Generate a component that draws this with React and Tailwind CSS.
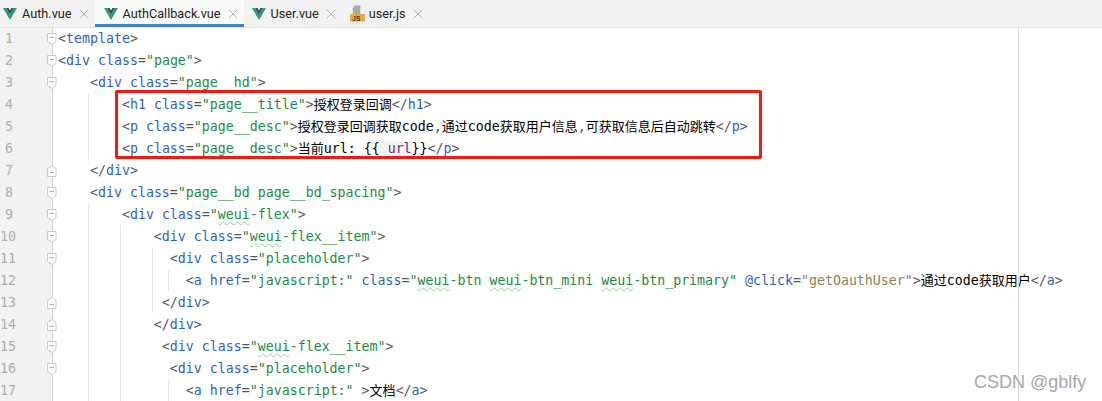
import { X } from "lucide-react";

const TAG = "text-[#2f5fc4]";
const ATTR = "text-[#2f5fc4]";
const STR = "text-[#1c8a46]";
const BR = "text-[#555555]";
const TXT = "text-black";

const Weui = ({ children }) => (
  <span className="underline decoration-wavy decoration-[#9cc79c] decoration-1 underline-offset-2">{children}</span>
);

const Open = ({ tag, children }) => (
  <>
    <span className={BR}>&lt;</span>
    <span className={TAG}>{tag}</span>
    {children}
    <span className={BR}>&gt;</span>
  </>
);

const Close = ({ tag }) => (
  <>
    <span className={BR}>&lt;/</span>
    <span className={TAG}>{tag}</span>
    <span className={BR}>&gt;</span>
  </>
);

const Attr = ({ name, children }) => (
  <>
    <span className={ATTR}> {name}</span>
    <span className={BR}>=</span>
    <span className={STR}>"{children}"</span>
  </>
);

const Cjk = ({ children }) => <span className={`${TXT} text-[13px]`}>{children}</span>;

const lines = [
  { fold: "start", code: <Open tag="template" /> },
  { fold: "start", code: <Open tag="div"><Attr name="class">page</Attr></Open> },
  { fold: "start", indent: "    ", code: <Open tag="div"><Attr name="class">page__hd</Attr></Open> },
  {
    indent: "        ",
    code: (
      <>
        <Open tag="h1"><Attr name="class">page__title</Attr></Open>
        <Cjk>授权登录回调</Cjk>
        <Close tag="h1" />
      </>
    ),
  },
  {
    indent: "        ",
    code: (
      <>
        <Open tag="p"><Attr name="class">page__desc</Attr></Open>
        <Cjk>授权登录回调获取</Cjk>
        <span className={TXT}>code</span>
        <span className={BR}>,</span>
        <Cjk>通过</Cjk>
        <span className={TXT}>code</span>
        <Cjk>获取用户信息</Cjk>
        <span className={BR}>,</span>
        <Cjk>可获取信息后自动跳转</Cjk>
        <Close tag="p" />
      </>
    ),
  },
  {
    indent: "        ",
    code: (
      <>
        <Open tag="p"><Attr name="class">page__desc</Attr></Open>
        <Cjk>当前</Cjk>
        <span className={TXT}>url: {"{{"}</span>
        <span className="bg-[#edf6ee] text-[#871094]"> url</span>
        <span className={TXT}>{"}}"}</span>
        <Close tag="p" />
      </>
    ),
  },
  { fold: "end", indent: "    ", code: <Close tag="div" /> },
  { fold: "start", indent: "    ", code: <Open tag="div"><Attr name="class">page__bd page__bd_spacing</Attr></Open> },
  {
    fold: "start",
    indent: "        ",
    code: <Open tag="div"><Attr name="class"><Weui>weui</Weui>-flex</Attr></Open>,
  },
  {
    fold: "start",
    indent: "            ",
    code: <Open tag="div"><Attr name="class"><Weui>weui</Weui>-flex__item</Attr></Open>,
  },
  { fold: "start", indent: "              ", code: <Open tag="div"><Attr name="class">placeholder</Attr></Open> },
  {
    indent: "                ",
    code: (
      <>
        <Open tag="a">
          <Attr name="href">javascript:</Attr>
          <Attr name="class">
            <Weui>weui</Weui>-btn <Weui>weui</Weui>-btn_mini <Weui>weui</Weui>-btn_primary
          </Attr>
          <span className="text-[#2f5fc4]"> @click</span>
          <span className={BR}>=</span>
          <span className="text-[#8c8455]">"getOauthUser"</span>
        </Open>
        <Cjk>通过</Cjk>
        <span className={TXT}>code</span>
        <Cjk>获取用户</Cjk>
        <Close tag="a" />
      </>
    ),
  },
  { fold: "end", indent: "             ", code: <Close tag="div" /> },
  { fold: "end", indent: "            ", code: <Close tag="div" /> },
  {
    fold: "start",
    indent: "             ",
    code: <Open tag="div"><Attr name="class"><Weui>weui</Weui>-flex__item</Attr></Open>,
  },
  { fold: "start", indent: "              ", code: <Open tag="div"><Attr name="class">placeholder</Attr></Open> },
  {
    indent: "                ",
    code: (
      <>
        <Open tag="a"><Attr name="href">javascript:</Attr><span> </span></Open>
        <Cjk>文档</Cjk>
        <Close tag="a" />
      </>
    ),
  },
];

const VueIcon = () => (
  <svg width="14" height="12" viewBox="0 0 14 12" className="shrink-0">
    <path d="M0 0h3.2L7 6.4 10.8 0H14L7 12z" fill="#2f9c77" />
    <path d="M3.2 0h2.3L7 2.6 8.5 0h2.3L7 6.4z" fill="#2f4a5e" />
  </svg>
);

const JsIcon = () => (
  <svg width="15" height="17" viewBox="0 0 16 17" className="-mr-px shrink-0">
    <path d="M5 0h6v9H3V3z" fill="#a8a8a8" />
    <rect x="0" y="9" width="16" height="8" fill="#e3a94b" />
    <text x="2.5" y="16" fontSize="7" fontWeight="700" fill="#4a3a1a" fontFamily="Liberation Sans, sans-serif">JS</text>
  </svg>
);

const Tab = ({ icon, name, active, className }) => (
  <div
    className={`flex h-full items-center gap-[5px] pr-[7px] ${className} ${
      active ? "border-b-[3px] border-[#4083c9] bg-[#fafafa] pt-[3px]" : ""
    }`}
  >
    {icon}
    <span className="text-[12.7px] text-[#222222]">{name}</span>
    <X size={16} strokeWidth={1.3} className="-ml-px -mr-[4px] text-[#a8a8a8]" />
  </div>
);

const Fold = ({ type }) => (
  <svg width="10" height="14" viewBox="0 0 10 14" className="-mr-[5px] relative z-10 shrink-0">
    {type === "start" ? (
      <path d="M.5 1.5h8.5v8L5 12.5 .5 9.5z" fill="#fff" stroke="#c8c8c8" />
    ) : (
      <path d="M.5 12.5h8.5v-8L5 1.5 .5 4.5z" fill="#fff" stroke="#c8c8c8" />
    )}
    <path d={type === "start" ? "M2.5 5.5h4.5" : "M2.5 8.5h4.5"} stroke="#b0b0b0" />
  </svg>
);

export default function App() {
  return (
    <div className="relative h-[401px] w-[1102px] overflow-hidden bg-white font-['Roboto',sans-serif]">
      {/* Tabs */}
      <div className="flex h-[28px] items-stretch border-b border-[#e4e4e4] bg-[#f2f2f2]">
        <Tab icon={<VueIcon />} name="Auth.vue" className="pl-[3px]" />
        <Tab icon={<VueIcon />} name="AuthCallback.vue" active className="pl-[9px]" />
        <Tab icon={<VueIcon />} name="User.vue" className="pl-[8px]" />
        <Tab icon={<JsIcon />} name="user.js" className="pl-[8px]" />
      </div>

      {/* Editor */}
      <div className="font-['DejaVu_Sans_Mono','Noto_Sans_CJK_SC',monospace] text-[13.28px] leading-[22px]">
        {lines.map((line, i) => (
          <div key={i} className="flex h-[22px]">
            <div className="flex w-[53px] shrink-0 items-center justify-between border-r border-[#d5d5d5] bg-[#f2f2f2] text-[#adadad]">
              <span className="w-[13px] text-right">{i + 1}</span>
              {line.fold && <Fold type={line.fold} />}
            </div>
            <div className="whitespace-pre pl-[5px]">
              {line.indent}
              {line.code}
            </div>
          </div>
        ))}
      </div>

      {/* Indent guides */}
      <div className="absolute left-[88px] top-[93px] h-[66px] w-px bg-[#e4e4e4]" />
      <div className="absolute left-[88px] top-[203px] h-[198px] w-px bg-[#e4e4e4]" />
      <div className="absolute left-[120px] top-[225px] h-[176px] w-px bg-[#e4e4e4]" />
      <div className="absolute left-[152px] top-[247px] h-[66px] w-px bg-[#e4e4e4]" />
      <div className="absolute left-[168px] top-[269px] h-[22px] w-px bg-[#e4e4e4]" />
      <div className="absolute left-[168px] top-[379px] h-[22px] w-px bg-[#e4e4e4]" />

      {/* Right margin */}
      <div className="absolute left-[1018px] top-[27px] h-[374px] w-px bg-[#dcdcdc]" />

      {/* Annotation */}
      <div className="absolute left-[115px] top-[90px] h-[69px] w-[647px] rounded-[2px] border-[3px] border-[#f5190f]" />

      {/* Watermark */}
      <div className="absolute left-[974px] top-[369px] font-['Liberation_Sans',sans-serif] text-[18px] text-[#a8a8a8]">
        CSDN @gblfy
      </div>
    </div>
  );
}
